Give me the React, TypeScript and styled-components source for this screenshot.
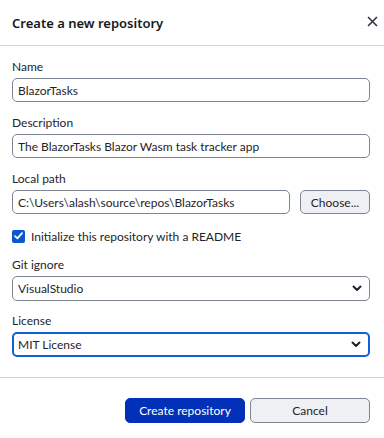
import styled, { createGlobalStyle } from "styled-components";

const GlobalStyle = createGlobalStyle`
  html, body {
    margin: 0;
    padding: 0;
    background: #fff;
  }
  body {
    font-family: Lato, "Noto Sans", sans-serif;
    color: #1f2328;
  }
`;

interface FieldProps {
  label: string;
  value: string;
}

const TextField = ({ label, value }: FieldProps) => (
  <Field>
    <Label>{label}</Label>
    <Input defaultValue={value} />
  </Field>
);

const Chevron = () => (
  <svg width="10" height="7" viewBox="0 0 10 7">
    <path d="M1.5 1.5 L5 5 L8.5 1.5" fill="none" stroke="#1f2328" strokeWidth="2" strokeLinecap="round" strokeLinejoin="round" />
  </svg>
);

interface SelectProps {
  label: string;
  value: string;
  focused?: boolean;
}

const SelectField = ({ label, value, focused }: SelectProps) => (
  <Field $gap={11}>
    <Label>{label}</Label>
    <SelectBox $focused={focused}>
      <span>{value}</span>
      <Chevron />
    </SelectBox>
  </Field>
);

const App = () => {
  return (
    <>
      <GlobalStyle />
      <Dialog>
        <Header>
          <Title>Create a new repository</Title>
          <CloseButton aria-label="Close">
            <svg width="11" height="11" viewBox="0 0 11 11">
              <path d="M1.5 1.5 L9.5 9.5 M9.5 1.5 L1.5 9.5" stroke="#333a44" strokeWidth="1.7" strokeLinecap="round" />
            </svg>
          </CloseButton>
        </Header>
        <Body>
          <TextField label="Name" value="BlazorTasks" />
          <TextField label="Description" value="The BlazorTasks Blazor Wasm task tracker app" />
          <Field>
            <Label>Local path</Label>
            <PathRow>
              <PathInput defaultValue="C:\Users\alash\source\repos\BlazorTasks" />
              <ChooseButton>Choose...</ChooseButton>
            </PathRow>
          </Field>
          <CheckRow>
            <CheckBox>
              <svg width="9" height="8" viewBox="0 0 9 8">
                <path d="M1 4.2 L3.4 6.4 L8 1.2" fill="none" stroke="#fff" strokeWidth="1.8" strokeLinecap="round" strokeLinejoin="round" />
              </svg>
            </CheckBox>
            Initialize this repository with a README
          </CheckRow>
          <SelectField label="Git ignore" value="VisualStudio" />
          <SelectField label="License" value="MIT License" focused />
        </Body>
        <Footer>
          <Button $primary>Create repository</Button>
          <Button>Cancel</Button>
        </Footer>
      </Dialog>
    </>
  );
};

const Dialog = styled.div`
  width: 384px;
  height: 438px;
  display: flex;
  flex-direction: column;
  background: #fff;
  font-size: 12px;
`;

const Header = styled.div`
  display: flex;
  align-items: center;
  justify-content: space-between;
  height: 45px;
  padding: 0 0 0 12px;
  border-bottom: 1px solid #d1d5db;
`;

const Title = styled.h1`
  margin: 0;
  font-family: "Noto Sans", sans-serif;
  font-size: 13px;
  font-weight: 600;
  color: #16191d;
`;

const CloseButton = styled.button`
  display: flex;
  align-items: center;
  justify-content: center;
  width: 24px;
  height: 24px;
  margin-top: -3px;
  padding: 0;
  border: none;
  background: transparent;
`;

const Body = styled.div`
  display: flex;
  flex-direction: column;
  padding: 12px 14px 20px 12px;
  border-bottom: 1px solid #d1d5db;
`;

const Field = styled.div<{ $gap?: number }>`
  display: flex;
  flex-direction: column;
  margin-bottom: ${(p) => p.$gap ?? 12}px;

  &:last-child {
    margin-bottom: 0;
  }
`;

const Label = styled.label`
  line-height: 18px;
  margin-bottom: 2px;
`;

const Input = styled.input`
  box-sizing: border-box;
  height: 24px;
  padding: 0 5px;
  border: 1px solid #7d8590;
  border-radius: 5px;
  font: inherit;
  color: #1f2328;
  background: #fff;
  outline: none;
`;

const PathInput = styled(Input)`
  flex: 1;
  min-width: 0;
`;

const PathRow = styled.div`
  display: flex;
  gap: 10px;
`;

const ChooseButton = styled.button`
  box-sizing: border-box;
  width: 70px;
  height: 24px;
  border: 1px solid #7d8590;
  border-radius: 5px;
  background: #eef0f4;
  font: inherit;
  color: #1f2328;
`;

const CheckRow = styled.label`
  display: flex;
  align-items: center;
  gap: 6px;
  height: 20px;
  margin: 0 0 10px;
`;

const CheckBox = styled.span`
  display: flex;
  align-items: center;
  justify-content: center;
  width: 13px;
  height: 13px;
  border-radius: 2px;
  background: #0a58d0;
`;

const SelectBox = styled.div<{ $focused?: boolean }>`
  box-sizing: border-box;
  display: flex;
  align-items: center;
  justify-content: space-between;
  height: 25px;
  padding: 0 7px 0 5px;
  border: ${(p) => (p.$focused ? "2px solid #1060d8" : "1px solid #7d8590")};
  padding-left: ${(p) => (p.$focused ? "4px" : "5px")};
  border-radius: 5px;
`;

const Footer = styled.div`
  display: flex;
  justify-content: flex-end;
  gap: 5px;
  padding: 20px 14px 0 0;
`;

const Button = styled.button<{ $primary?: boolean }>`
  box-sizing: border-box;
  width: 120px;
  height: 25px;
  border-radius: 5px;
  border: 1px solid ${(p) => (p.$primary ? "#0230b8" : "#7d8590")};
  background: ${(p) => (p.$primary ? "#0230b8" : "#eef0f4")};
  color: ${(p) => (p.$primary ? "#fff" : "#1f2328")};
  font: inherit;
`;

export default App;
